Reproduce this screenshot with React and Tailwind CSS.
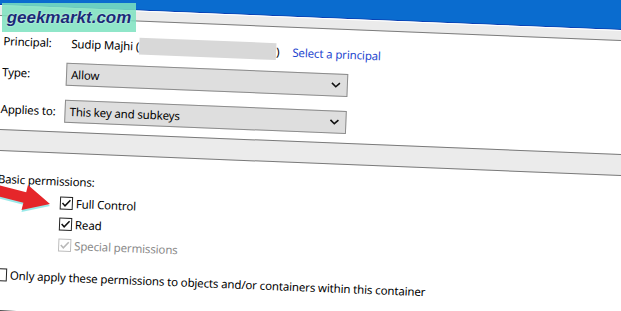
import React from "react";

function Check({ checked = true, disabled = false }) {
  const stroke = disabled ? "#b8b8b8" : "#111111";
  return (
    <span
      className={`flex h-[13px] w-[13px] shrink-0 items-center justify-center border bg-white ${
        disabled ? "border-[#bdbdbd]" : "border-[#222222]"
      }`}
    >
      {checked && (
        <svg width="11" height="11" viewBox="0 0 11 11">
          <path d="M1.6 5.4 L4.2 8.1 L9.4 2.2" fill="none" stroke={stroke} strokeWidth="1.5" />
        </svg>
      )}
    </span>
  );
}

function Chevron() {
  return (
    <svg width="10" height="7" viewBox="0 0 10 7">
      <path d="M1 1.5 L5 5.2 L9 1.5" fill="none" stroke="#111" strokeWidth="1.6" />
    </svg>
  );
}

function Combo({ text }) {
  return (
    <div className="flex h-[23px] w-[282px] items-center justify-between border border-[#8c8c8c] bg-[#dedede] pl-[4px] pr-[6px]">
      <span>{text}</span>
      <Chevron />
    </div>
  );
}

export default function App() {
  return (
    <div className="relative h-[311px] w-[621px] overflow-hidden bg-white font-['Noto_Sans',sans-serif] text-[11.5px] leading-[16px] tracking-[-0.15px] text-black">
      <div className="flow-root w-[700px] origin-top-left rotate-[2.3deg]">
        <div className="-mt-[40px] h-[45px] border-b border-[#0b3fb2] bg-[#0a6ccf]" />
        <div className="h-[11px] border-t border-b border-t-white border-b-[#7c7c7c] bg-[#ebebeb]" />

        <div className="mt-[16px] flex h-[17px] items-center">
          <span className="w-[69px] pl-[5px]">Principal:</span>
          <span className="ml-[4px]">Sudip Majhi (</span>
          <span className="h-[17px] w-[137px] bg-[#d8d8d8]" />
          <span>)</span>
          <span className="ml-[13px] text-[#1f47cf]">Select a principal</span>
        </div>

        <div className="mt-[11px] flex h-[23px] items-center">
          <span className="w-[69px] pl-[5px]">Type:</span>
          <Combo text="Allow" />
        </div>

        <div className="mt-[14px] flex h-[23px] items-center">
          <span className="w-[69px] pl-[5px]">Applies to:</span>
          <Combo text="This key and subkeys" />
        </div>

        <div className="mt-[9px] h-[22px] border-y border-[#7a7a7a] bg-[#ebebeb]" />

        <div className="mt-[20px] pl-[5px]">Basic permissions:</div>

        <div className="mt-[3px] flex flex-col pl-[68px]">
          <div className="flex h-[21px] items-center gap-[3px]">
            <Check />
            <span>Full Control</span>
          </div>
          <div className="flex h-[21px] items-center gap-[3px]">
            <Check />
            <span>Read</span>
          </div>
          <div className="flex h-[21px] items-center gap-[3px]">
            <Check disabled />
            <span className="text-[#8a8a8a]">Special permissions</span>
          </div>
        </div>

        <div className="mt-[11px] flex h-[21px] items-center gap-[3px] pl-[5px]">
          <Check checked={false} />
          <span>Only apply these permissions to objects and/or containers within this container</span>
        </div>

        <div className="ml-[5px] mt-[25px] h-[10px] w-[24px] border-t border-[#111]" />
      </div>

      <svg className="absolute left-0 top-0" width="621" height="311" viewBox="0 0 621 311">
        <polygon
          points="-12.5,184.2 26.2,194.2 28,187 50,206 21.5,212 23.4,204.8 -15.3,194.8"
          fill="#7fe3e3"
          opacity="0.8"
        />
        <polygon
          points="-12.5,182.2 26.2,192.2 28,185 50,204 21.5,210 23.4,202.8 -15.3,192.8"
          fill="#e5262a"
        />
      </svg>

      <div className="absolute left-[2px] top-[3px] flex h-[29px] w-[134px] items-center justify-center bg-[rgba(125,226,192,0.85)]">
        <span className="font-['Liberation_Sans',sans-serif] text-[17px] font-bold italic leading-none tracking-normal text-[#1b2a78] [text-shadow:0_0_2px_#e8fff6]">
          geekmarkt.com
        </span>
      </div>
    </div>
  );
}
